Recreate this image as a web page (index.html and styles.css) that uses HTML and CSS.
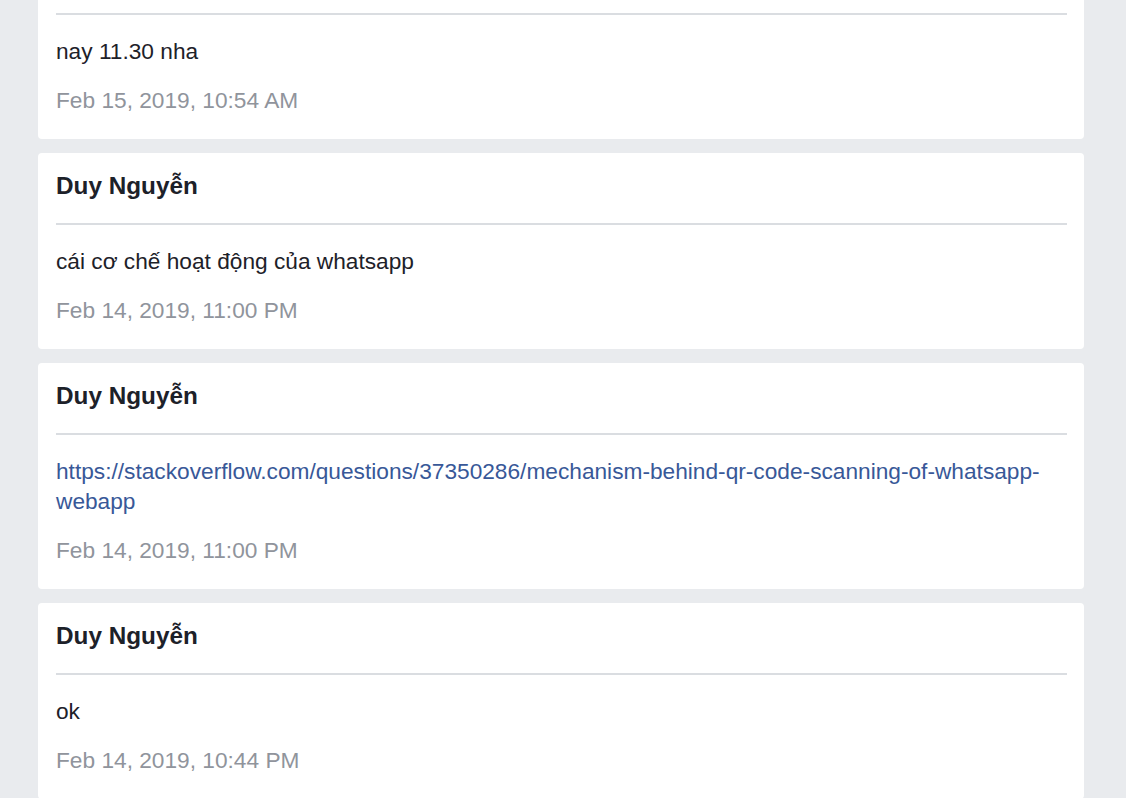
FILE: index.html
```html
<!DOCTYPE html>
<html>
<head>
<meta charset="utf-8">
<link rel="stylesheet" href="styles.css">
</head>
<body>
<div class="feed">
  <div class="card">
    <div class="name">Duy Nguyễn</div>
    <div class="divider"></div>
    <div class="body">nay 11.30 nha</div>
    <div class="date">Feb 15, 2019, 10:54 AM</div>
  </div>
  <div class="card">
    <div class="name">Duy Nguyễn</div>
    <div class="divider"></div>
    <div class="body">cái cơ chế hoạt động của whatsapp</div>
    <div class="date">Feb 14, 2019, 11:00 PM</div>
  </div>
  <div class="card">
    <div class="name">Duy Nguyễn</div>
    <div class="divider"></div>
    <div class="body"><a class="link" href="#">https://stackoverflow.com/questions/37350286/mechanism-behind-qr-code-scanning-of-whatsapp-webapp</a></div>
    <div class="date">Feb 14, 2019, 11:00 PM</div>
  </div>
  <div class="card">
    <div class="name">Duy Nguyễn</div>
    <div class="divider"></div>
    <div class="body">ok</div>
    <div class="date">Feb 14, 2019, 10:44 PM</div>
  </div>
</div>
</body>
</html>
```

FILE: styles.css
```css
html, body {
  margin: 0;
  padding: 0;
  background: #e9ebee;
  font-family: "Liberation Sans", Arial, sans-serif;
  overflow: hidden;
}
.feed {
  margin: -57px 42px 0 38px;
  display: flex;
  flex-direction: column;
  gap: 14px;
}
.card {
  background: #ffffff;
  border-radius: 4px;
  padding: 18px 17px 24px 18px;
}
.name {
  font-size: 24.3px;
  font-weight: bold;
  line-height: 30px;
  color: #1d2129;
}
.divider {
  height: 2px;
  background: #dadde1;
  margin: 22px 0 21px 0;
}
.body {
  font-size: 22.7px;
  line-height: 30px;
  color: #1d2129;
  word-break: break-word;
}
.link {
  color: #385898;
  text-decoration: none;
}
.date {
  margin-top: 19px;
  font-size: 22.7px;
  line-height: 30px;
  color: #90949c;
}
```
